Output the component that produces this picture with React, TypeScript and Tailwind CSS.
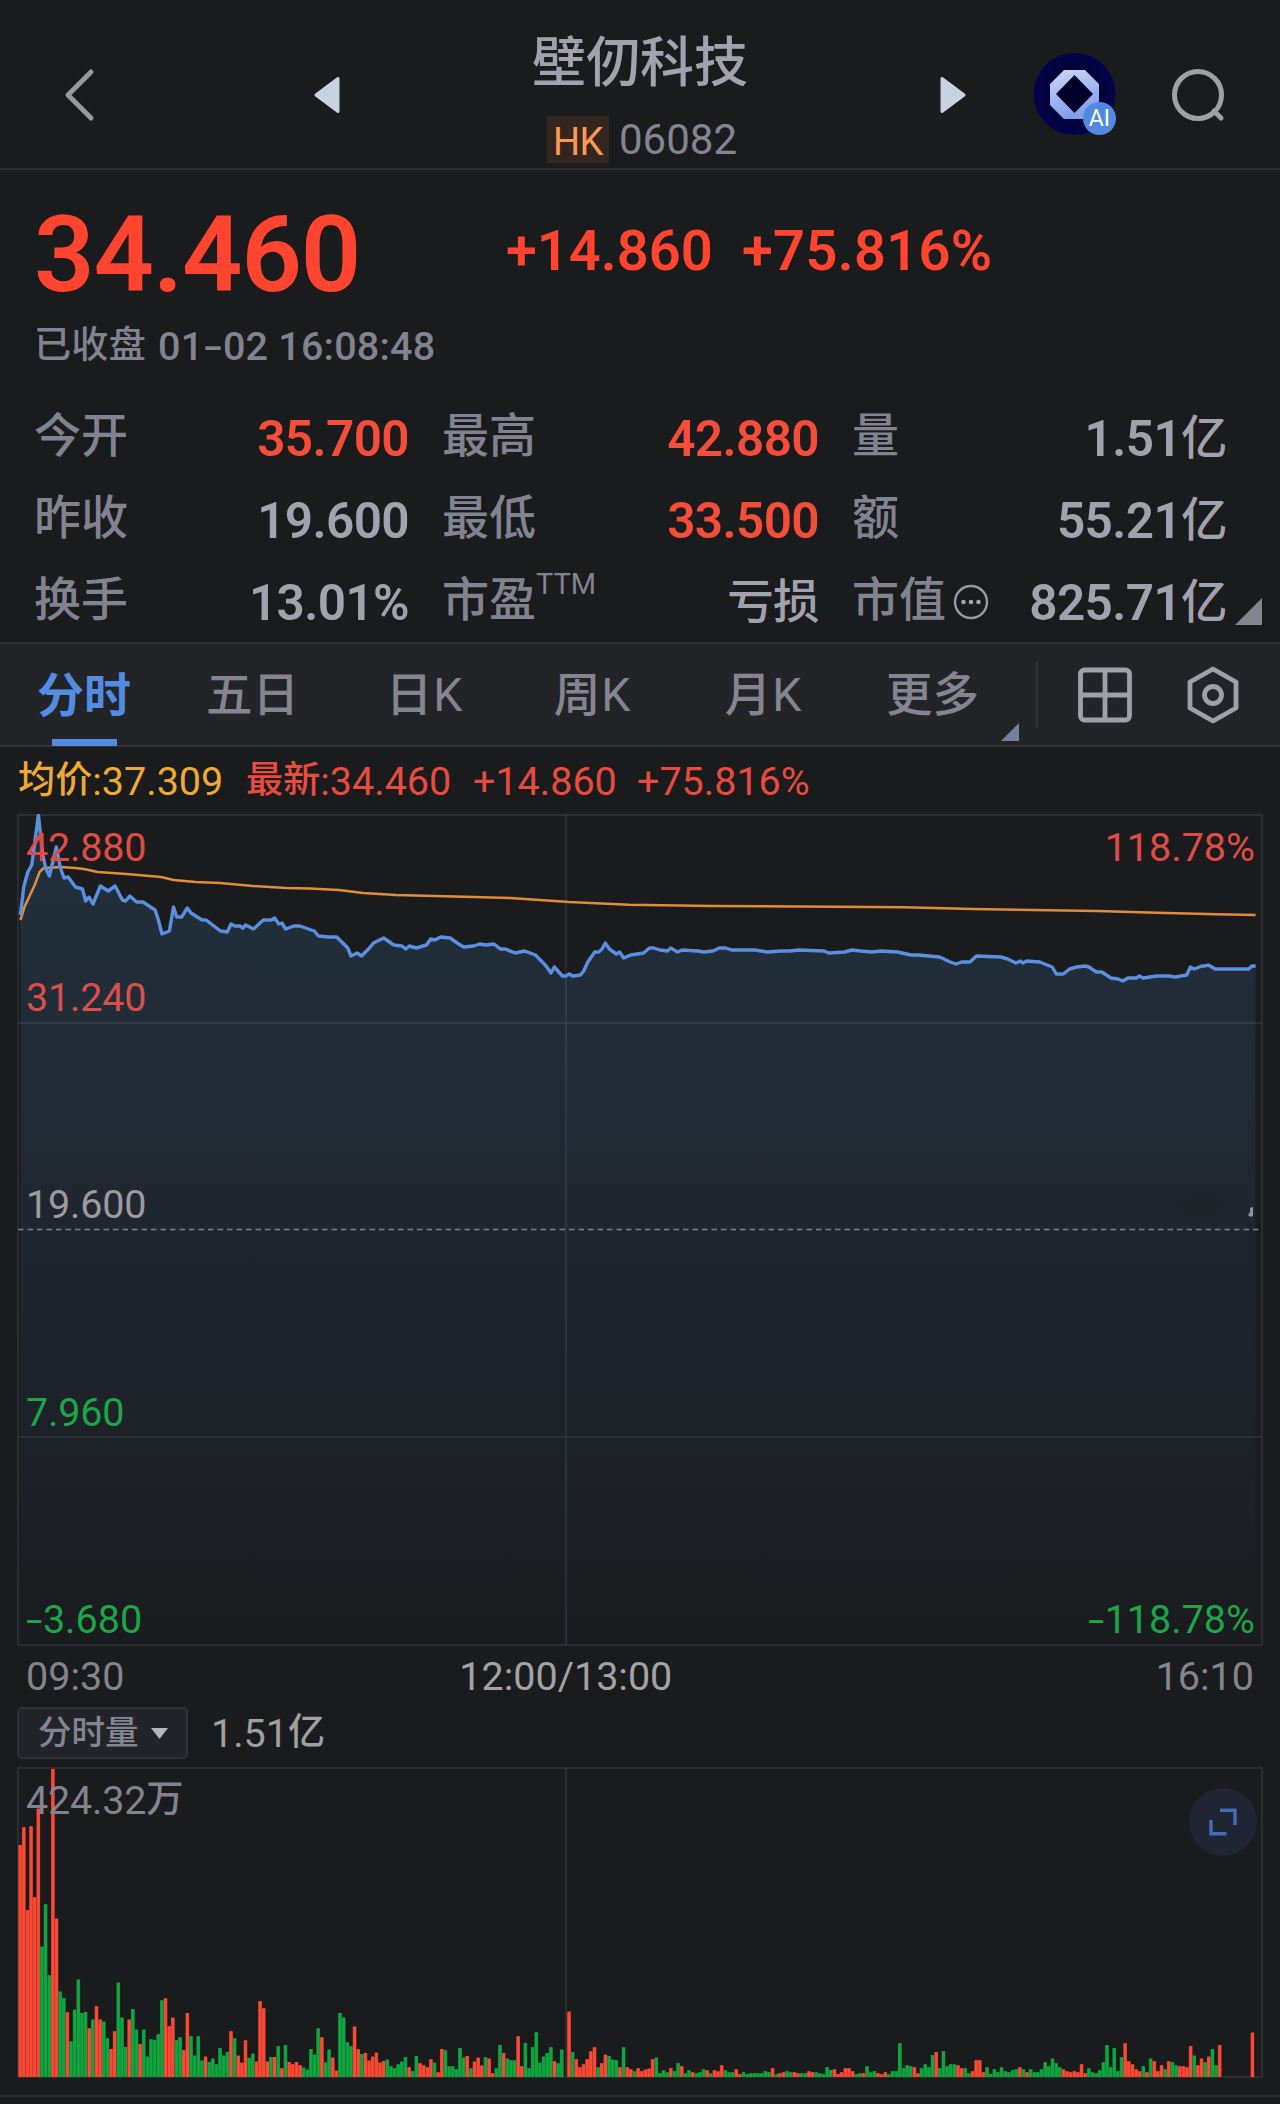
import type { ReactNode } from "react"
import clsx from "clsx"

const stats = [
  { label: "今开", value: "35.700", up: true },
  { label: "最高", value: "42.880", up: true },
  { label: "量", value: "1.51", unit: "亿" },
  { label: "昨收", value: "19.600" },
  { label: "最低", value: "33.500", up: true },
  { label: "额", value: "55.21", unit: "亿" },
  { label: "换手", value: "13.01%" },
  { label: "市盈", sup: "TTM", value: "", unit: "亏损" },
  { label: "市值", info: true, value: "825.71", unit: "亿" },
]

// Intraday price line, chart pixel space
const pricePoints =
  "20.4,915 23.7,887 27.8,872 31.8,865 38.4,815 42.4,853 45.7,868 49.4,876 56.3,847 60.4,868 64.1,878 68.2,877 75.5,887 82.4,889 85.7,901 89,897 93,904 100.4,886 108.2,891 115.1,886 122.4,900 125.7,901 129.8,896 136.7,902 142.9,902 155.1,910 158.4,920 162,934 169.4,931 173.5,907 176.7,917 181.6,917 187.3,908 191,913 202,920 206.1,920 220.4,931 227.3,932 231,924 234.7,926 240,926 242.9,928 245.7,925 253.5,929 263.3,920 271.4,920 274.7,918 278.8,924 282,923 285.7,929 293.9,926 300,926 314.3,931 318.4,936 328.6,937 336.7,937 347.8,948 351,956 357.1,953 361.6,956 369.4,948 373.5,943 383.7,938 393.9,945 402,946 405.7,949 409.4,946 416.3,948 426.5,945 430.6,939 434.7,940 440.8,937 450.2,938 457.1,943 463.7,947 473.5,946 479.6,944 485.7,945 493.9,944 500.4,949 505.3,949 515.1,953 524.5,951 535.5,955 546.1,966 551,973 554.3,967 562.4,976 565.7,976 569.4,974 572.7,976 580.4,975 583.7,971 587.8,962 594.7,952 598.8,952 602,949 605.3,943 609.4,949 616.3,954 619.6,952 623.7,958 630.6,955 643.6,953 649.5,948 653.7,948 660.1,950 667.4,951 670.7,948 677.5,952 682.1,950 697.7,951 704.2,952 712.9,951 719.3,948 725.7,948 731.7,950 755.1,950 767.5,952 780.4,951 789.6,951 798.8,950 824,951 828.6,953 844.7,952 852,950 860.7,951 872.2,952 881.4,951 897.5,952 911.2,955 918.1,955 939.7,957 950.3,962 955.8,964 961.7,962 970,962 976.4,956 1000.8,957 1007.7,959 1015.9,963 1020.5,961 1022.8,963 1026.5,961 1039.8,962 1052.2,967 1056.3,974 1063.2,974 1069.6,969 1076.5,967 1085.3,966 1088.9,967 1096.3,972 1101.8,972 1111,978 1117.9,979 1122.9,981 1128,978 1136.2,978 1139.4,976 1143.1,978 1156.9,976 1168.3,976 1175.2,977 1186.7,975 1190.4,967 1194.5,969 1201.9,966 1205.1,966 1208.3,965 1215.2,969 1248.7,969 1251.9,966 1255.6,966"

const averagePoints =
  "20.4,920 24.5,907 34.7,885 39.6,872 43.7,868 61.2,867 75.5,868 83.7,869 98,872 126.5,874 161.2,877 173.5,880 195.9,882 220,883 253,886 285.7,888 310,888.5 338.8,890 363,893 396,895 473.5,897 510,898 565.7,901.7 569,902 629,904.7 711.5,906 835.5,906.7 904,907.3 973,909 1097,911 1157,912.7 1216.6,914.3 1255.6,915"

// One entry per minute; sign is the direction (positive = up), 924 is the peak
const volumes = [
  696, 749, 501, 752, 539, 805, -391, -518, -305, 924, 475, -256, -236, 194, -107, -202, -292, -192, -195, 146,
  -172, 212, 172, -166, -116, 84, 137, -283, -178, -90, 172, -204, -142, 99, -142, -61, -113, -111, -128, -230,
  236, 152, 178, -110, -119, 81, 192, -122, -64, -122, -49, 61, -45, -55, -38, -87, -64, -75, 137, -116,
  64, 43, 110, -57, -70, 46, 227, 206, 46, -60, 60, -93, 26, -96, 45, 38, 45, 35, -28, -22,
  -84, -67, -146, 119, -43, -82, 58, 19, -192, -178, -104, -92, 151, 83, -69, 72, 49, 61, 73, 43,
  48, -52, -32, -26, -38, -46, -60, 29, -17, -63, 41, 35, 29, 53, -43, 14, 84, -80, -32, -32,
  -23, -87, -58, 63, -26, 46, 58, 34, -59, 55, 11, -26, -96, 72, -55, -50, -50, 122, 32, -102,
  -26, -89, -134, -43, -61, -72, -89, 47, -41, -82, 0, 196, -75, 53, 29, 38, 53, 77, 89, -29,
  41, 67, -63, -52, -50, 29, -89, 29, 23, -17, 26, 17, 22, 25, 53, -58, -11, -20, -14, 26,
  -17, -41, 32, -11, -20, 14, -11, -14, -23, 20, -11, 20, 17, 35, -20, -14, -14, 23, 8, -14,
  -9, -11, -11, -11, -11, -17, -14, 26, -8, 11, 14, -17, -14, 14, 11, -11, -11, 17, 14, -14,
  -11, -8, -29, -21, 23, 9, 14, 26, 26, 17, -9, -11, 11, -32, -14, -17, 11, 8, 14, -8,
  -17, -17, -101, -26, -35, -32, 29, 11, -26, -38, -29, -66, 75, -26, -78, -32, -38, -38, 35, 26,
  -26, -11, 17, 50, 50, 14, -29, -9, -23, -14, -29, -17, -14, -20, -23, 29, -23, 14, -23, -14,
  -14, -23, -44, -32, -55, -41, -29, 23, 17, 14, 17, 14, 38, 11, -26, -14, -11, -20, -44, -96,
  -29, -87, -17, -59, 101, 47, 38, 23, 17, -32, 14, -55, 47, 17, 35, -23, 47, -44, -35, 32,
  32, 29, 93, -64, 35, 55, -44, 61, -84, -35, 96, 0, 0, 0, 0, 0, 0, 0, 0, 133,
]

function Cjk({ children }: { children: ReactNode }) {
  return <span className="align-[0.05em] text-[0.94em] leading-none font-medium">{children}</span>
}

// Roboto's hyphen is short, stretch it to the width of a minus sign
function Minus() {
  return <span className="mr-[6px] inline-block origin-left scale-x-150">-</span>
}

function Header() {
  return (
    <header className="grid h-[170px] grid-cols-[440px_400px_440px] border-b-2 border-[#2b2c2f]">
      <div className="flex items-center pt-[22px] pl-[62px]">
        <svg className="h-[56px] w-[34px]" viewBox="0 0 34 56" fill="none" stroke="#99999c" strokeWidth="5" strokeLinecap="round" strokeLinejoin="round">
          <path d="M29 5 L6 28 L29 51" />
        </svg>
        <svg className="ml-[217px] h-[38px] w-[28px]" viewBox="0 0 28 38" fill="#c8d3e2" stroke="#c8d3e2" strokeWidth="3" strokeLinejoin="round">
          <path d="M3 19 L25 2.5 V35.5 Z" />
        </svg>
      </div>

      <div className="flex flex-col items-center">
        <h1 className="mt-[32px] h-[64px] text-[54px] leading-[64px] font-medium text-[#a2a1ad]">壁仞科技</h1>
        <div className="mt-[20px] ml-[4px] flex h-[47px] items-center gap-[10px]">
          <span className="flex h-[47px] w-[62px] items-center justify-center bg-[#33261f] pt-[5px] text-[38px] leading-none tracking-[-0.5px] text-[#ff9654]">
            HK
          </span>
          <span className="text-[42px] leading-[47px] text-[#858592]">06082</span>
        </div>
      </div>

      <div className="flex items-center pt-[22px] pl-[98px]">
        <svg className="h-[40px] w-[30px]" viewBox="0 0 30 40" fill="#c8d3e2" stroke="#c8d3e2" strokeWidth="3" strokeLinejoin="round">
          <path d="M26 20 L4 3.5 V36.5 Z" />
        </svg>
        <div className="relative ml-[65px] h-[84px] w-[84px]">
          <svg className="h-[84px] w-[84px]" viewBox="0 0 84 84">
            <defs>
              <radialGradient id="logoBg">
                <stop offset="0.4" stopColor="#00002c" />
                <stop offset="1" stopColor="#03034c" />
              </radialGradient>
              <linearGradient id="logoRing" x1="0" y1="0" x2="0.3" y2="1">
                <stop offset="0" stopColor="#ccd9f4" />
                <stop offset="1" stopColor="#809eec" />
              </linearGradient>
            </defs>
            <circle cx="41.5" cy="41" r="41" fill="url(#logoBg)" />
            <path fillRule="evenodd" fill="url(#logoRing)" d="M31 17 H52 L66 31 V52 L52 66 H31 L17 52 V31 Z M41.5 22 L23 41 L41.5 60 L60 41 Z" />
          </svg>
          <span className="absolute right-px bottom-[2px] flex size-[33px] items-center justify-center rounded-full bg-[#5089de] text-[23px] leading-none text-white">
            AI
          </span>
        </div>
        <svg className="ml-[54px] h-[58px] w-[58px]" viewBox="0 0 58 58" fill="none" stroke="#a0a0a3" strokeWidth="5" strokeLinecap="round">
          <circle cx="27" cy="29" r="23.5" />
          <path d="M43 45 L50 52" />
        </svg>
      </div>
    </header>
  )
}

function Quote() {
  return (
    <section className="h-[472px] pt-[30px]">
      <div className="flex h-[110px] items-center pl-[34px] text-[#ff4530]">
        <span className="w-[472px] text-[106px] leading-[110px] font-semibold tracking-[-1.1px]">34.460</span>
        <span className="-mt-[8px] w-[236px] text-[56px] leading-[56px] font-semibold">+14.860</span>
        <span className="-mt-[8px] text-[56px] leading-[56px] font-semibold tracking-[0.3px]">+75.816%</span>
      </div>
      <div className="mt-[13px] h-[48px] pl-[34px] text-[39.5px] leading-[48px] font-medium tracking-[0.2px] text-[#828390]">
        <Cjk>已收盘</Cjk>
        <span className="ml-[12px]">
          01
          <Minus />
          02 16:08:48
        </span>
      </div>

      <div className="relative mt-[24px] grid grid-cols-[374px_376px_374px] gap-x-[34px] pl-[35px]">
        {stats.map((s) => (
          <div key={s.label} className="flex h-[82px] items-center justify-between">
            <span className="-ml-px flex items-center text-[47px] leading-[80px] font-medium text-[#828390]">
              {s.label}
              {s.sup && <span className="-mt-8 text-[29px] font-normal">{s.sup}</span>}
              {s.info && (
                <svg className="mt-[3px] ml-[7px] h-[36px] w-[36px]" viewBox="0 0 36 36" fill="none">
                  <circle cx="18" cy="18" r="16" stroke="#9a9aa5" strokeWidth="2.4" />
                  <g fill="#a6a6b0">
                    <circle cx="10.5" cy="18" r="2.3" />
                    <circle cx="18" cy="18" r="2.3" />
                    <circle cx="25.5" cy="18" r="2.3" />
                  </g>
                </svg>
              )}
            </span>
            <span className={clsx("pt-[7px] text-[49.5px] leading-[75px] font-semibold tracking-[-0.6px]", s.up ? "text-[#f44d3a]" : "text-[#a2a1ae]")}>
              {s.value}
              {s.unit && <Cjk>{s.unit}</Cjk>}
            </span>
          </div>
        ))}
        <svg className="absolute right-[18px] bottom-[16px] h-[27px] w-[27px]" viewBox="0 0 27 27">
          <path d="M27 0 V27 H0 Z" fill="#858592" />
        </svg>
      </div>
    </section>
  )
}

function PeriodTabs() {
  return (
    <nav className="flex h-[105px] items-center border-y-2 border-[#2f3034] bg-[#232428] text-[46.5px] leading-[104px] font-medium text-[#858592]">
      <div className="flex h-full w-[168px] flex-col items-center font-bold text-[#548ce4]">
        <span className="h-[95px] text-[47px] leading-[104px]">分时</span>
        <span className="h-[7px] w-[65px] shrink-0 bg-[#548ce4]" />
      </div>
      <span className="w-[169px] text-center">五日</span>
      <span className="w-[175px] text-center tracking-[1px]">
        日<span className="font-normal">K</span>
      </span>
      <span className="w-[161px] text-center tracking-[1px]">
        周<span className="font-normal">K</span>
      </span>
      <span className="w-[181px] text-center tracking-[1px]">
        月<span className="font-normal">K</span>
      </span>
      <div className="flex w-[182px] items-end justify-end">
        <span>更多</span>
        <svg className="mr-[17px] mb-[6px] ml-[22px] h-[18px] w-[18px] shrink-0" viewBox="0 0 18 18">
          <path d="M18 0 V18 H0 Z" fill="#72829d" />
        </svg>
      </div>
      <span className="h-[67px] w-[2px] bg-[#313236]" />
      <svg className="mt-px ml-[38px] h-[58px] w-[58px]" viewBox="0 0 58 58" fill="none" stroke="#a0a0a6" strokeWidth="4.8">
        <rect x="4.5" y="4" width="49" height="50" rx="4" />
        <path d="M29 4 V54 M4.5 29 H53.5" />
      </svg>
      <svg className="mt-px ml-[51px] h-[60px] w-[56px]" viewBox="0 0 56 60" fill="none" stroke="#a0a0a6" strokeWidth="4.8" strokeLinejoin="round">
        <path d="M28 4 L51 17 V43 L28 56 L5 43 V17 Z" />
        <circle cx="28" cy="30" r="8.5" />
      </svg>
    </nav>
  )
}

function Legend() {
  return (
    <div className="flex h-[67px] items-center pt-[3px] pl-[18px] text-[39.5px] leading-[64px]">
      <span className="w-[228px] text-[#eea936]">
        <Cjk>均价</Cjk>:37.309
      </span>
      <span className="w-[227px] text-[#e84c40]">
        <Cjk>最新</Cjk>:34.460
      </span>
      <span className="w-[164px] text-[#e84c40]">+14.860</span>
      <span className="text-[#e84c40]">+75.816%</span>
    </div>
  )
}

function PriceChart() {
  return (
    <div className="relative mx-[17px] h-[832px] text-[39.5px] leading-[40px]">
      <svg className="block h-[832px] w-[1246px]" viewBox="17 814 1246 832" fill="none">
        <defs>
          <linearGradient id="area" x1="0" y1="815" x2="0" y2="1645" gradientUnits="userSpaceOnUse">
            <stop offset="0" stopColor="#222f3c" />
            <stop offset="0.25" stopColor="#212c37" />
            <stop offset="0.5" stopColor="#202630" />
            <stop offset="0.75" stopColor="#1d2128" />
            <stop offset="1" stopColor="#1a1b1e" />
          </linearGradient>
          <radialGradient id="smudge">
            <stop offset="0" stopColor="#20242a" />
            <stop offset="1" stopColor="#20242a" stopOpacity="0" />
          </radialGradient>
        </defs>
        <polygon points={`20.4,1645 ${pricePoints} 1255.6,1645`} fill="url(#area)" />
        <ellipse cx="1203" cy="1204" rx="52" ry="20" fill="url(#smudge)" />
        <g stroke="#8497a8" strokeOpacity="0.2" strokeWidth="1.5">
          <rect x="18" y="815" width="1244" height="830" />
          <path d="M566 815 V1645 M18 1023 H1262 M18 1437 H1262" />
        </g>
        <path d="M18 1229.5 H1262" stroke="#7c828b" strokeWidth="1.5" strokeDasharray="5.5 4" />
        <polyline points={averagePoints} stroke="#e08e3c" strokeWidth="2.5" strokeLinejoin="round" />
        <polyline points={pricePoints} stroke="#5b8fe0" strokeWidth="3.4" strokeLinejoin="round" />
        <path d="M1253 1207 V1216 Q1250 1218 1248 1215 Q1251 1212 1250 1208 Z" fill="#8d9599" />
      </svg>
      <span className="absolute top-[14px] left-[9px] tracking-[-0.2px] text-[#e04c46]">42.880</span>
      <span className="absolute top-[164px] left-[9px] tracking-[-0.2px] text-[#d9504a]">31.240</span>
      <span className="absolute top-[371px] left-[9px] tracking-[-0.2px] text-[#9c9c9f]">19.600</span>
      <span className="absolute top-[579px] left-[9px] tracking-[-0.2px] text-[#1da549]">7.960</span>
      <span className="absolute top-[786px] left-[9px] text-[#1da549]">
        <Minus />
        3.680
      </span>
      <span className="absolute top-[14px] right-[8px] text-[#e04c46]">118.78%</span>
      <span className="absolute top-[786px] right-[8px] text-[#1da549]">
        <Minus />
        118.78%
      </span>
    </div>
  )
}

function TimeAxis() {
  return (
    <div className="flex h-[60px] items-center justify-between pt-px pr-[26px] pl-[26px] text-[39.5px] leading-[60px] text-[#84848f]">
      <span className="w-[110px]">09:30</span>
      <span className="mr-[265px] ml-[105px] text-[#a3a3a5]">12:00/13:00</span>
      <span>16:10</span>
    </div>
  )
}

function VolumeChart() {
  return (
    <section>
      <div className="flex h-[54px] items-center pl-[17px]">
        <button className="flex h-[52px] w-[171px] items-center rounded-[5px] border-2 border-[#303136] bg-[#232429] pl-[19px] text-[33.5px] leading-[50px] font-medium text-[#858592]">
          分时量
          <svg className="ml-[12px] h-[11px] w-[17px]" viewBox="0 0 17 11">
            <path d="M0 0 H17 L8.5 11 Z" fill="#b5b5bd" />
          </svg>
        </button>
        <span className="ml-[23px] pt-[2px] text-[39.5px] leading-[50px] text-[#a0a0a2]">
          1.51<Cjk>亿</Cjk>
        </span>
      </div>

      <div className="relative mx-[17px] mt-[7px] h-[311px]">
        <svg className="block h-[311px] w-[1246px]" viewBox="0 0 1246 311" fill="none">
          <g stroke="#2c2d31" strokeWidth="2">
            <rect x="1" y="1" width="1244" height="309" />
            <path d="M549 1 V310" />
          </g>
          {volumes.map((v, i) => {
            const h = Math.abs(v) / 3
            return (
              <g key={i}>
                <rect x={1.3 + i * 3.635} y={310 - h} width="3.65" height={h} fill={v > 0 ? "#d83c2e" : "#12903a"} />
                <rect x={1.8 + i * 3.635} y={310 - h} width="2.8" height={h} fill={v > 0 ? "#f94a36" : "#10a53f"} />
              </g>
            )
          })}
        </svg>
        <span className="absolute top-[14px] left-[9px] text-[39.5px] leading-[40px] tracking-[-0.2px] text-[#82838f]">
          424.32<Cjk>万</Cjk>
        </span>
        <span className="absolute top-[21px] right-[6px] flex size-[68px] items-center justify-center rounded-full bg-[#1f2532]">
          <svg className="h-[28px] w-[28px]" viewBox="0 0 28 28" fill="none" stroke="#426fb8" strokeWidth="3.4">
            <path d="M11 2.2 H26 V17 M2 12 V25.8 H17.5" />
          </svg>
        </span>
      </div>
    </section>
  )
}

export default function App() {
  return (
    <div className="h-[2104px] w-[1280px] overflow-hidden bg-[#1a1b1c] font-[Roboto,'Noto_Sans_CJK_SC',sans-serif]">
      <Header />
      <Quote />
      <PeriodTabs />
      <Legend />
      <PriceChart />
      <TimeAxis />
      <VolumeChart />
      <div className="mt-[17px] border-t-2 border-[#2b2c2f]" />
    </div>
  )
}
